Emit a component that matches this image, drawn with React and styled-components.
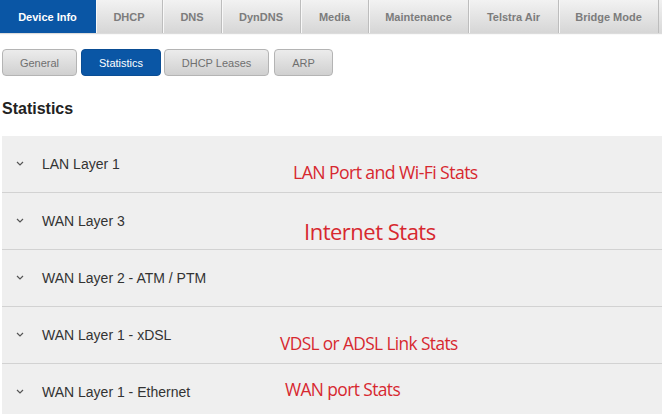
import React from "react";
import styled, { createGlobalStyle } from "styled-components";

const Global = createGlobalStyle`
  html, body { margin: 0; padding: 0; background: #fff; }
  body { font-family: "Liberation Sans", Arial, sans-serif; width: 662px; height: 414px; overflow: hidden; }
`;

const TabBar = styled.nav`
  display: flex;
  height: 33px;
  width: 662px;
  box-shadow: 0 1px 1px #dcdcdc;
  background: linear-gradient(#f1f1f1, #d9d9d9);
`;

const Tab = styled.div`
  width: ${(p) => p.$w}px;
  flex: none;
  display: flex;
  align-items: center;
  justify-content: center;
  box-sizing: border-box;
  font-size: 11px;
  font-weight: bold;
  color: ${(p) => (p.$active ? "#fff" : "#7c7c7c")};
  background: ${(p) => (p.$active ? "#0a56a5" : "linear-gradient(#f2f2f2, #d6d6d6)")};
  border-right: 1px solid ${(p) => (p.$active ? "#0a56a5" : "#bdbdbd")};
  box-shadow: ${(p) => (p.$active ? "none" : "inset 1px 0 0 #f8f8f8")};
`;

const Content = styled.main`
  padding-left: 2px;
`;

const SubNav = styled.div`
  display: flex;
  margin-top: 16px;
  height: 27px;
`;

const SubButton = styled.div`
  width: ${(p) => p.$w}px;
  margin-right: ${(p) => p.$gap}px;
  flex: none;
  box-sizing: border-box;
  display: flex;
  align-items: center;
  justify-content: center;
  border-radius: 4px;
  font-size: 11px;
  color: ${(p) => (p.$active ? "#fff" : "#6f6f6f")};
  background: ${(p) => (p.$active ? "#0a56a5" : "linear-gradient(#ececec, #d0d0d0)")};
  border: 1px solid ${(p) => (p.$active ? "#0a4d94" : "#b4b4b4")};
`;

const Heading = styled.h2`
  margin: 23px 0 0;
  font-size: 16px;
  line-height: 20px;
  font-weight: bold;
  color: #222;
`;

const Accordion = styled.section`
  margin-top: 17px;
  background: #efefef;
`;

const Row = styled.div`
  position: relative;
  height: 57px;
  box-sizing: border-box;
  border-bottom: 1px solid #d2d2d2;
  display: flex;
  align-items: center;
  padding-bottom: 1px;
`;

const Chevron = styled.svg`
  width: 8px;
  height: 5px;
  margin-left: 14px;
  margin-right: 18px;
  flex: none;
`;

const Label = styled.span`
  font-size: 14px;
  color: #333;
`;

const Note = styled.span`
  position: absolute;
  left: ${(p) => p.$x}px;
  top: ${(p) => p.$y}px;
  transform: translateY(-50%);
  font-family: "Open Sans", "Noto Sans", sans-serif;
  font-size: ${(p) => p.$size}px;
  letter-spacing: ${(p) => p.$ls}px;
  color: #d7282f;
  white-space: nowrap;
`;

const tabs = [
  ["Device Info", 96, true],
  ["DHCP", 67],
  ["DNS", 59],
  ["DynDNS", 79],
  ["Media", 68],
  ["Maintenance", 100],
  ["Telstra Air", 90],
  ["Bridge Mode", 100],
];

const subs = [
  ["General", 75, 4],
  ["Statistics", 80, 3, true],
  ["DHCP Leases", 105, 5],
  ["ARP", 59, 0],
];

const rows = [
  { label: "LAN Layer 1", note: { t: "LAN Port and Wi-Fi Stats", x: 291, y: 36, s: 17.7, ls: -0.6 } },
  { label: "WAN Layer 3", note: { t: "Internet Stats", x: 302, y: 38, s: 22, ls: -0.5 } },
  { label: "WAN Layer 2 - ATM / PTM" },
  { label: "WAN Layer 1 - xDSL", note: { t: "VDSL or ADSL Link Stats", x: 278, y: 36, s: 17.3, ls: -0.6 } },
  { label: "WAN Layer 1 - Ethernet", note: { t: "WAN port Stats", x: 283, y: 25, s: 17.4, ls: -0.6 } },
];

export default function App() {
  return (
    <>
      <Global />
      <TabBar>
        {tabs.map(([t, w, a]) => (
          <Tab key={t} $w={w} $active={a}>{t}</Tab>
        ))}
      </TabBar>
      <Content>
        <SubNav>
          {subs.map(([t, w, g, a]) => (
            <SubButton key={t} $w={w} $gap={g} $active={a}>{t}</SubButton>
          ))}
        </SubNav>
        <Heading>Statistics</Heading>
        <Accordion>
          {rows.map((r) => (
            <Row key={r.label}>
              <Chevron viewBox="0 0 8 5">
                <path d="M1 1 L4 4 L7 1" fill="none" stroke="#555" strokeWidth="1.2" />
              </Chevron>
              <Label>{r.label}</Label>
              {r.note && (
                <Note $x={r.note.x} $y={r.note.y} $size={r.note.s} $ls={r.note.ls}>{r.note.t}</Note>
              )}
            </Row>
          ))}
        </Accordion>
      </Content>
    </>
  );
}
